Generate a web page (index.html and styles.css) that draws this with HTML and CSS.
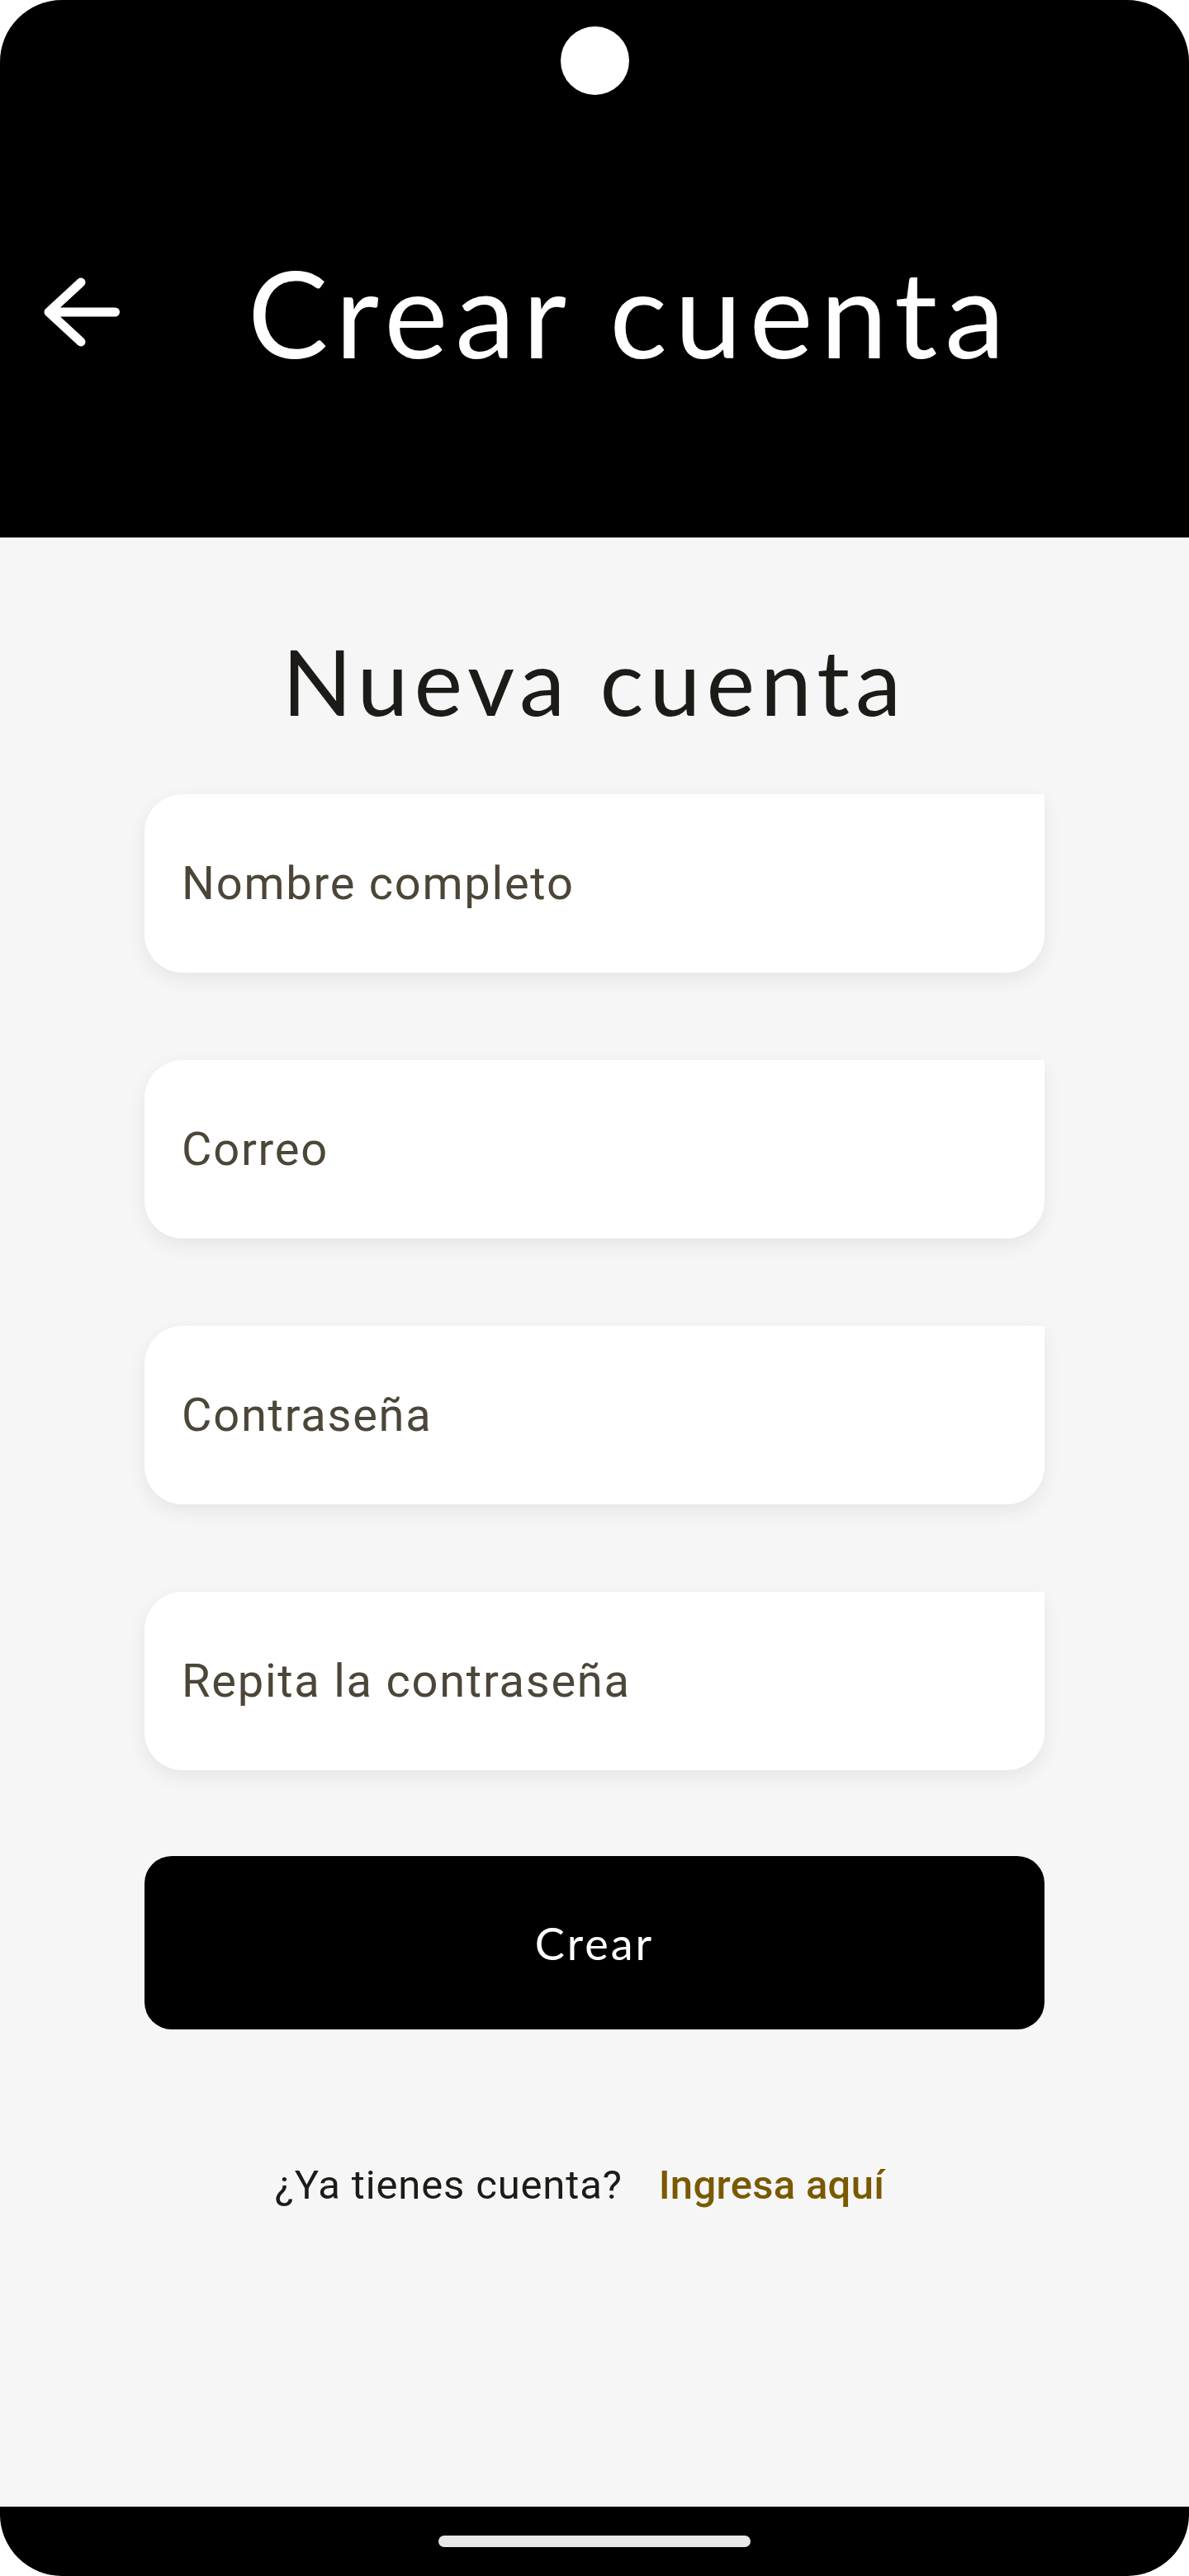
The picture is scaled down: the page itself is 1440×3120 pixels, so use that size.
FILE: index.html
```html
<!DOCTYPE html>
<html lang="es">
<head>
<meta charset="utf-8">
<title>Crear cuenta</title>
<link rel="stylesheet" href="styles.css">
</head>
<body>
<div class="device">
  <header class="header">
    <div class="status">
      <div class="camera"></div>
    </div>
    <div class="toolbar">
      <svg class="back" width="100" height="100" viewBox="0 0 100 100" aria-label="Volver">
        <path d="M50 14 L11 50 L50 86 M11 50 H91.5" fill="none" stroke="#fff" stroke-width="11" stroke-linecap="round" stroke-linejoin="round"/>
      </svg>
      <h1 class="title">Crear cuenta</h1>
    </div>
  </header>
  <main class="main">
    <h2 class="subtitle">Nueva cuenta</h2>
    <form class="form">
      <div class="field"><span class="placeholder">Nombre completo</span></div>
      <div class="field"><span class="placeholder">Correo</span></div>
      <div class="field"><span class="placeholder">Contraseña</span></div>
      <div class="field"><span class="placeholder">Repita la contraseña</span></div>
      <button type="button" class="btn">Crear</button>
    </form>
    <p class="login">
      <span class="login-q">¿Ya tienes cuenta?</span>
      <a class="login-link">Ingresa aquí</a>
    </p>
  </main>
  <nav class="navbar">
    <div class="pill"></div>
  </nav>
</div>
</body>
</html>
```
FILE: styles.css
```css
html, body {
  margin: 0;
  padding: 0;
  background: #ffffff;
}

.device {
  width: 1440px;
  height: 3120px;
  border-radius: 75px;
  overflow: hidden;
  background: #f6f6f6;
  display: flex;
  flex-direction: column;
}

.header {
  height: 651px;
  background: #000;
  display: flex;
  flex-direction: column;
  flex-shrink: 0;
}

.status {
  height: 300px;
  display: flex;
  justify-content: center;
  padding-top: 32px;
  box-sizing: border-box;
}

.camera {
  width: 83px;
  height: 83px;
  border-radius: 50%;
  background: #fff;
}

.toolbar {
  height: 156px;
  display: flex;
  align-items: center;
  padding-left: 48px;
}

.back {
  display: block;
  flex-shrink: 0;
}

.title {
  margin: 0 0 0 152px;
  font-family: Lato, "Noto Sans", sans-serif;
  font-weight: 400;
  font-size: 146px;
  line-height: 1;
  color: #fff;
  letter-spacing: 9px;
}

.main {
  flex: 1;
  display: flex;
  flex-direction: column;
  align-items: center;
}

.subtitle {
  margin: 118px 0 0;
  font-family: Lato, "Noto Sans", sans-serif;
  font-weight: 400;
  font-size: 111px;
  line-height: 1;
  color: #1d1b18;
  letter-spacing: 7px;
}

.form {
  width: 1090px;
  margin-top: 82px;
  display: flex;
  flex-direction: column;
  gap: 106px;
}

.field {
  height: 216px;
  background: #fff;
  border-radius: 46px 0 46px 46px;
  box-shadow: 0 8px 24px rgba(0, 0, 0, 0.07);
  display: flex;
  align-items: center;
  padding-left: 45px;
  box-sizing: border-box;
}

.placeholder {
  font-family: Roboto, "Noto Sans", sans-serif;
  font-size: 56px;
  letter-spacing: 1.75px;
  color: #4c4639;
}

.btn {
  height: 210px;
  margin-top: -2px;
  border: 0;
  border-radius: 33px;
  background: #000;
  color: #fff;
  font-family: Lato, "Noto Sans", sans-serif;
  font-size: 54px;
  letter-spacing: 3px;
  cursor: pointer;
}

.login {
  margin: 164px 0 0;
  padding-right: 36px;
  font-family: Roboto, "Noto Sans", sans-serif;
  font-size: 49px;
  line-height: 1;
  display: flex;
  gap: 44px;
}

.login-q {
  color: #1d1b18;
  letter-spacing: 0.85px;
}

.login-link {
  color: #7a5900;
  font-weight: 500;
  letter-spacing: 0.3px;
}

.navbar {
  height: 84px;
  background: #000;
  flex-shrink: 0;
  display: flex;
  justify-content: center;
  align-items: center;
}

.pill {
  width: 378px;
  height: 14px;
  border-radius: 7px;
  background: #e8e8e8;
}
```
